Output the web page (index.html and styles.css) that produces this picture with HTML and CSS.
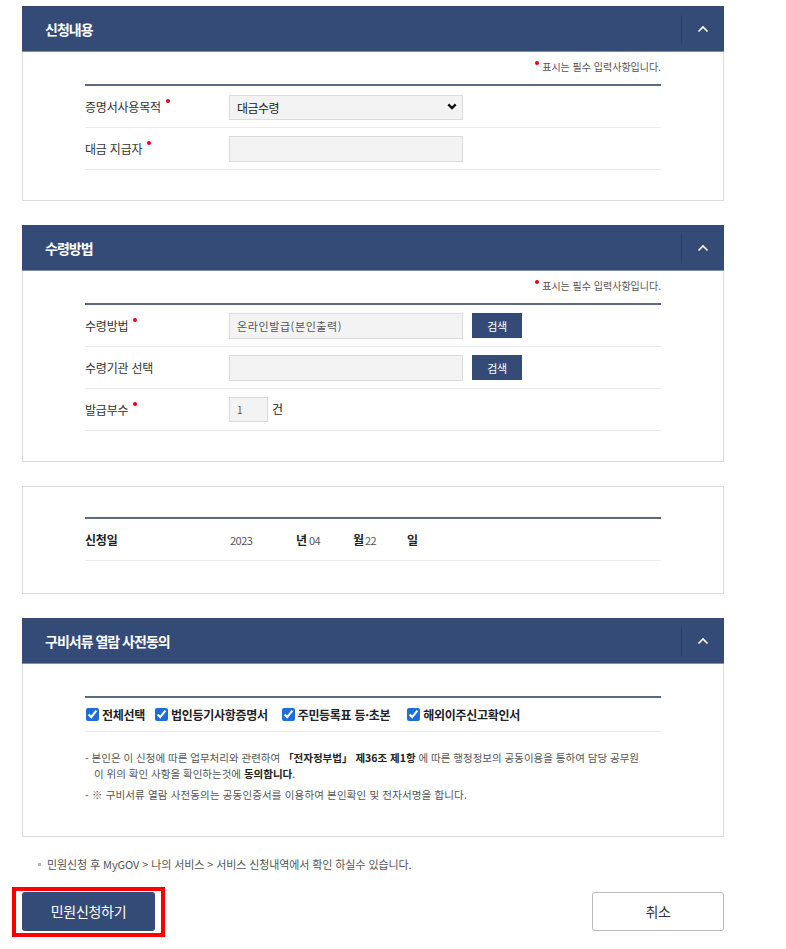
FILE: index.html
```html
<!DOCTYPE html>
<html lang="ko">
  <head>
    <meta charset="UTF-8" />
    <meta name="viewport" content="width=device-width, initial-scale=1.0" />
    <title>민원신청</title>
    <link rel="stylesheet" href="styles.css">
  </head>

  <body>
    <div class="container">
      <!-- 신청내용 -->
      <div class="panel">
        <div class="panel-head">
          <h2>신청내용</h2>
          <button class="toggle" type="button">
            <svg width="12" height="8" viewBox="0 0 12 8"><polyline points="1.5,6.5 6,2 10.5,6.5" fill="none" stroke="#fff" stroke-width="1.6" /></svg>
          </button>
        </div>
        <div class="panel-body">
          <p class="req-note"><span class="dot"></span>표시는 필수 입력사항입니다.</p>
          <div class="form-table">
            <div class="form-row">
              <div class="label required">증명서사용목적</div>
              <div class="field">
                <div class="select-wrap">
                  <select>
                    <option>대금수령</option>
                  </select>
                  <svg class="select-arrow" width="10" height="7" viewBox="0 0 10 7"><polyline points="1.3,1.3 5,5 8.7,1.3" fill="none" stroke="#111" stroke-width="2.4" /></svg>
                </div>
              </div>
            </div>
            <div class="form-row">
              <div class="label required">대금 지급자</div>
              <div class="field">
                <input type="text" class="text-input" />
              </div>
            </div>
          </div>
        </div>
      </div>

      <!-- 수령방법 -->
      <div class="panel">
        <div class="panel-head">
          <h2>수령방법</h2>
          <button class="toggle" type="button">
            <svg width="12" height="8" viewBox="0 0 12 8"><polyline points="1.5,6.5 6,2 10.5,6.5" fill="none" stroke="#fff" stroke-width="1.6" /></svg>
          </button>
        </div>
        <div class="panel-body">
          <p class="req-note"><span class="dot"></span>표시는 필수 입력사항입니다.</p>
          <div class="form-table">
            <div class="form-row">
              <div class="label required">수령방법</div>
              <div class="field">
                <input type="text" class="text-input spaced" value="온라인발급(본인출력)" readonly />
                <button class="search-btn" type="button">검색</button>
              </div>
            </div>
            <div class="form-row">
              <div class="label">수령기관 선택</div>
              <div class="field">
                <input type="text" class="text-input" readonly />
                <button class="search-btn" type="button">검색</button>
              </div>
            </div>
            <div class="form-row">
              <div class="label required">발급부수</div>
              <div class="field">
                <input type="text" class="count-input" value="1" />
                <span class="unit">건</span>
              </div>
            </div>
          </div>
        </div>
      </div>

      <!-- 신청일 -->
      <div class="panel">
        <div class="panel-body no-head">
          <div class="form-table">
            <div class="form-row">
              <div class="label bold">신청일</div>
              <div class="field date">
                <span class="num year">2023</span><b>년</b><span class="num month">04</span><b>월</b><span class="num day">22</span><b>일</b>
              </div>
            </div>
          </div>
        </div>
      </div>

      <!-- 구비서류 열람 사전동의 -->
      <div class="panel">
        <div class="panel-head">
          <h2>구비서류 열람 사전동의</h2>
          <button class="toggle" type="button">
            <svg width="12" height="8" viewBox="0 0 12 8"><polyline points="1.5,6.5 6,2 10.5,6.5" fill="none" stroke="#fff" stroke-width="1.6" /></svg>
          </button>
        </div>
        <div class="panel-body no-note">
          <div class="form-table">
            <div class="check-row">
              <label><input type="checkbox" checked />전체선택</label>
              <label><input type="checkbox" checked />법인등기사항증명서</label>
              <label><input type="checkbox" checked />주민등록표 등·초본</label>
              <label><input type="checkbox" checked />해외이주신고확인서</label>
            </div>
          </div>
          <div class="consent">
            <p>- 본인은 이 신청에 따른 업무처리와 관련하여 <b>「전자정부법」</b> <b>제36조 제1항</b> 에 따른 행정정보의 공동이용을 통하여 담당 공무원</p>
            <p class="cont">이 위의 확인 사항을 확인하는것에 <b>동의합니다</b>.</p>
            <p class="last">- ※ 구비서류 열람 사전동의는 공동인증서를 이용하여 본인확인 및 전자서명을 합니다.</p>
          </div>
        </div>
      </div>

      <p class="bottom-note">민원신청 후 MyGOV &gt; 나의 서비스 &gt; 서비스 신청내역에서 확인 하실수 있습니다.</p>

      <div class="actions">
        <div class="highlight">
          <button class="primary-btn" type="button">민원신청하기</button>
        </div>
        <button class="cancel-btn" type="button">취소</button>
      </div>
    </div>
  </body>
</html>
```

FILE: styles.css
```css
body {
  margin: 0;
  background-color: #fff;
  font-family: "Noto Sans CJK KR", "Noto Sans", sans-serif;
  color: #333;
  letter-spacing: -0.3px;
}

.container {
  width: 702px;
  padding: 6px 0 0 22px;
}

/* 패널 */
.panel + .panel {
  margin-top: 24px;
}

.panel-head {
  display: flex;
  align-items: center;
  height: 46px;
  background-color: #344b78;
  box-shadow: inset 0 -1px 0 #7e8fae;
}

.panel-head h2 {
  flex: 1;
  margin: 0;
  padding-left: 23px;
  font-size: 14px;
  font-weight: bold;
  color: #fff;
  letter-spacing: -1px;
}

.toggle {
  width: 43px;
  height: 29px;
  padding: 0;
  border: none;
  border-left: 1px solid #2d4168;
  background: transparent;
  display: flex;
  align-items: center;
  justify-content: center;
}

.panel-body {
  border: 1px solid #dcdcdc;
  border-top: none;
  padding: 7px 62px 30px;
}

.panel-body.no-head {
  border-top: 1px solid #dcdcdc;
  padding: 30px 62px 32px;
}

.panel-body.no-note {
  padding: 32px 62px 33px;
}

.req-note {
  margin: 0 0 9px;
  text-align: right;
  font-size: 10px;
  line-height: 16px;
  color: #555;
  letter-spacing: 0;
}

.dot {
  display: inline-block;
  width: 4px;
  height: 4px;
  border-radius: 50%;
  background-color: #e5001a;
  margin-right: 3px;
  vertical-align: 6px;
}

/* 입력 테이블 */
.form-table {
  border-top: 2px solid #5e6a7c;
}

.form-row {
  display: flex;
  align-items: center;
  height: 41px;
  border-bottom: 1px solid #ececec;
}

.label {
  width: 144px;
  font-size: 12px;
  color: #333;
  letter-spacing: -0.2px;
}

.label.bold {
  font-weight: bold;
  color: #222;
}

.label.required::after {
  content: "";
  display: inline-block;
  width: 4px;
  height: 4px;
  border-radius: 50%;
  background-color: #e5001a;
  margin-left: 5px;
  vertical-align: 9px;
}

.field {
  display: flex;
  align-items: center;
}

.select-wrap {
  position: relative;
}

select {
  appearance: none;
  width: 234px;
  height: 25px;
  padding: 0 7px;
  border: 1px solid #dcdcdc;
  background-color: #f3f3f3;
  font-family: inherit;
  font-size: 12px;
  letter-spacing: -0.5px;
  color: #222;
}

.select-arrow {
  position: absolute;
  right: 6px;
  top: 9px;
}

.text-input {
  box-sizing: border-box;
  width: 234px;
  height: 26px;
  padding: 0 7px;
  border: 1px solid #dcdcdc;
  background-color: #f3f3f3;
  font-family: inherit;
  font-size: 11px;
  color: #555;
}

.text-input.spaced {
  letter-spacing: 0.6px;
}

.search-btn {
  width: 50px;
  height: 25px;
  margin-left: 9px;
  border: none;
  background-color: #344b78;
  color: #fff;
  font-family: inherit;
  font-size: 11px;
  letter-spacing: -0.3px;
}

.count-input {
  box-sizing: border-box;
  width: 39px;
  height: 25px;
  padding: 0 7px;
  border: 1px solid #dcdcdc;
  background-color: #f3f3f3;
  font-family: inherit;
  font-size: 10px;
  color: #555;
}

.unit {
  margin-left: 4px;
  font-size: 12px;
  color: #222;
  margin-top: -3px;
}

/* 신청일 */
.date {
  font-size: 12px;
}

.date .num {
  display: inline-block;
  font-size: 11px;
  color: #555;
  letter-spacing: -0.5px;
}

.date .year {
  width: 66px;
  padding-left: 1px;
}

.date .month {
  width: 44px;
  padding-left: 2px;
}

.date .day {
  width: 42px;
  padding-left: 1px;
}

.date b {
  display: inline-block;
  width: 11px;
  color: #222;
}

/* 동의 */
.check-row {
  display: flex;
  align-items: center;
  height: 33px;
  border-bottom: 1px solid #ececec;
  font-size: 12px;
  font-weight: bold;
  color: #222;
}

.check-row label {
  display: flex;
  align-items: center;
  margin-right: 9px;
}

.check-row label:nth-child(2) {
  margin-right: 13px;
}

.check-row label:nth-child(3) {
  margin-right: 16px;
}

.check-row input {
  width: 13px;
  height: 13px;
  margin: 0 3px 0 1px;
  accent-color: #1d6fd6;
}

.consent {
  margin-top: 18px;
  font-size: 10.5px;
  color: #555;
  letter-spacing: 0;
}

.consent p {
  margin: 0;
  line-height: 15.5px;
  white-space: nowrap;
}

.consent .cont {
  padding-left: 9px;
}

.consent .last {
  margin-top: 6px;
  letter-spacing: 0.15px;
}

.consent b {
  color: #222;
}

/* 하단 */
.bottom-note {
  margin: 20px 0 0 16px;
  font-size: 11px;
  line-height: 14px;
  color: #555;
  letter-spacing: -0.1px;
}

.bottom-note::before {
  content: "";
  display: inline-block;
  width: 3px;
  height: 3px;
  background-color: #b5b5b5;
  margin-right: 6px;
  vertical-align: 3px;
}

.actions {
  display: flex;
  justify-content: space-between;
  align-items: flex-start;
  margin: 16px 0 0 -10px;
  width: 712px;
}

.highlight {
  border: 4px solid #ff0000;
  padding: 1px 6px 2px;
}

button {
  cursor: pointer;
}

.primary-btn {
  display: block;
  width: 133px;
  height: 39px;
  border: none;
  border-radius: 3px;
  background-color: #344b78;
  color: #fff;
  font-family: inherit;
  font-size: 14px;
  letter-spacing: -0.3px;
}

.cancel-btn {
  width: 132px;
  height: 39px;
  margin-top: 5px;
  border: 1px solid #bbb;
  border-radius: 3px;
  background-color: #fff;
  color: #333;
  font-family: inherit;
  font-size: 14px;
  letter-spacing: -0.3px;
}
```
